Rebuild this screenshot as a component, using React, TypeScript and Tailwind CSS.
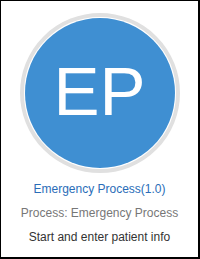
export default function App() {
  return (
    <div
      className="w-[200px] h-[259px] border-l border-t border-r-2 border-b-2 border-black bg-white flex flex-col items-center pt-[12px]"
      style={{ fontFamily: '"Liberation Sans", Arial, sans-serif' }}
    >
      {/* avatar */}
      <div className="w-[160px] h-[160px] rounded-full border-4 border-[#e0e0e0] bg-white p-px shrink-0">
        <div className="w-full h-full rounded-full bg-[#3f8fd2] flex items-center justify-center pb-[4px] text-white text-[69px] leading-none">
          EP
        </div>
      </div>

      <div className="mt-[4px] text-[12px] leading-[24px] text-center">
        <div className="text-[#2a6db8]">Emergency Process(1.0)</div>
        <div className="text-[#777777]">Process: Emergency Process</div>
        <div className="text-[#333333]">Start and enter patient info</div>
      </div>
    </div>
  )
}
